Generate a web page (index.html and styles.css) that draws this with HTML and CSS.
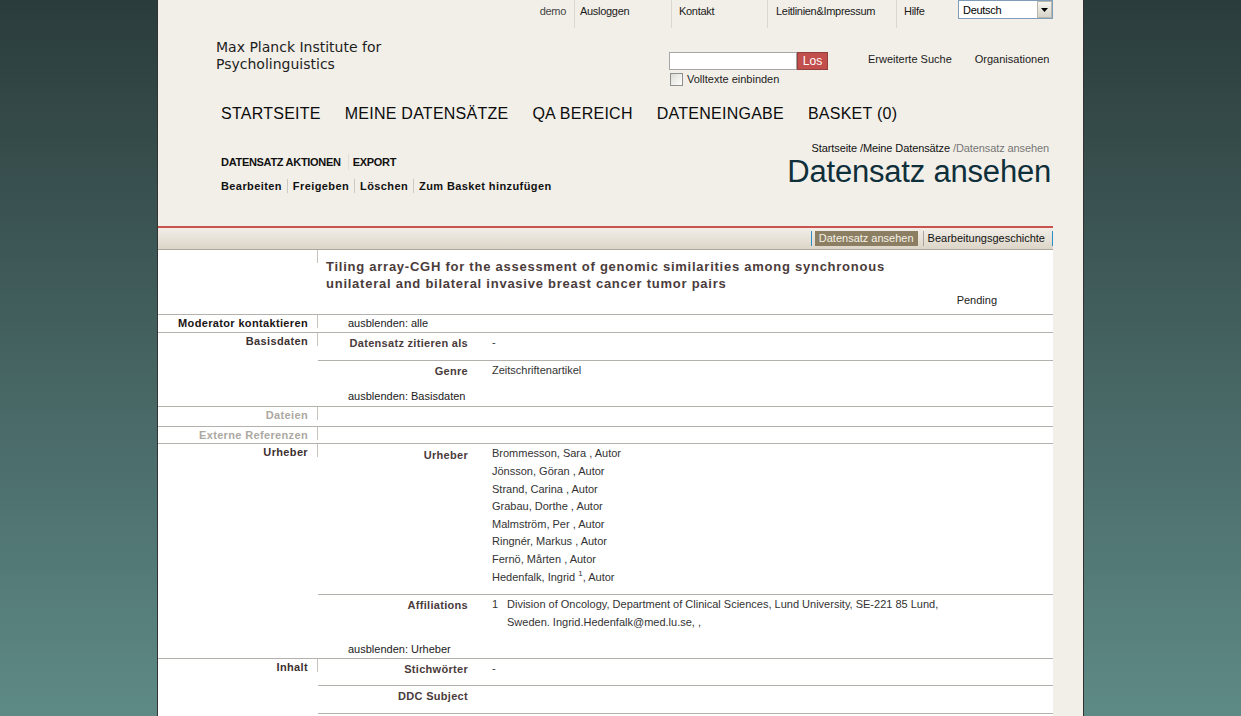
FILE: index.html
```html
<!DOCTYPE html>
<html lang="de">
<head>
<meta charset="utf-8">
<title>Datensatz ansehen</title>
<link rel="stylesheet" href="styles.css">
</head>
<body>
<div class="page">
  <div class="main">
    <header class="header">
      <div class="topbar">
        <span class="user">demo</span>
        <a class="toplink toplink--logout">Ausloggen</a>
        <a class="toplink toplink--contact">Kontakt</a>
        <a class="toplink toplink--imprint">Leitlinien&amp;Impressum</a>
        <a class="toplink toplink--help">Hilfe</a>
        <div class="lang">
          <span class="lang-text">Deutsch</span>
          <span class="lang-btn"><svg width="7" height="4" viewBox="0 0 7 4"><path d="M0 0h7L3.5 4z" fill="#000"/></svg></span>
        </div>
      </div>
      <div class="brand">
        <div class="logo">Max Planck Institute for<br>Psycholinguistics</div>
        <div class="search">
          <div class="search-row">
            <span class="search-input"></span>
            <span class="search-btn">Los</span>
          </div>
          <label class="fulltext"><span class="checkbox"></span>Volltexte einbinden</label>
        </div>
        <div class="brand-links">
          <a>Erweiterte Suche</a>
          <a>Organisationen</a>
        </div>
      </div>
      <nav class="mainnav">
        <a>STARTSEITE</a>
        <a>MEINE DATENSÄTZE</a>
        <a>QA BEREICH</a>
        <a>DATENEINGABE</a>
        <a>BASKET (0)</a>
      </nav>
      <div class="subheader">
        <div class="actions-col">
          <div class="action-tabs">
            <span>DATENSATZ AKTIONEN</span>
            <span class="action-tab-sep">EXPORT</span>
          </div>
          <div class="action-links">
            <a>Bearbeiten</a>
            <a>Freigeben</a>
            <a>Löschen</a>
            <a>Zum Basket hinzufügen</a>
          </div>
        </div>
        <div class="title-col">
          <div class="breadcrumb">Startseite /Meine Datensätze <span class="crumb-current">/Datensatz ansehen</span></div>
          <h1 class="page-title">Datensatz ansehen</h1>
        </div>
      </div>
    </header>
    <div class="redline"></div>
    <div class="tabbar">
      <span class="tab tab--first"><span class="tab-active">Datensatz ansehen</span></span>
      <span class="tab">Bearbeitungsgeschichte</span>
      <span class="tab-end"></span>
    </div>
    <div class="record">
      <div class="rec-head">
        <div class="sec-label"></div>
        <div class="rec-head-body">
          <h2 class="rec-title">Tiling array-CGH for the assessment of genomic similarities among synchronous unilateral and bilateral invasive breast cancer tumor pairs</h2>
          <div class="status">Pending</div>
        </div>
      </div>

      <div class="sec sec--moderator">
        <div class="sec-label sec-label--dark">Moderator kontaktieren</div>
        <div class="sec-body"><div class="hide">ausblenden: alle</div></div>
      </div>

      <div class="sec sec--basis">
        <div class="sec-label">Basisdaten</div>
        <div class="sec-body">
          <div class="field"><div class="field-label">Datensatz zitieren als</div><div class="field-value">-</div></div>
          <div class="field"><div class="field-label">Genre</div><div class="field-value">Zeitschriftenartikel</div></div>
          <div class="hide">ausblenden: Basisdaten</div>
        </div>
      </div>

      <div class="sec sec--files">
        <div class="sec-label sec-label--muted">Dateien</div>
        <div class="sec-body"></div>
      </div>

      <div class="sec sec--refs">
        <div class="sec-label sec-label--muted">Externe Referenzen</div>
        <div class="sec-body"></div>
      </div>

      <div class="sec sec--creators">
        <div class="sec-label">Urheber</div>
        <div class="sec-body">
          <div class="field">
            <div class="field-label field-label--low">Urheber</div>
            <div class="field-value field-value--list">
              <div>Brommesson, Sara , Autor</div>
              <div>Jönsson, Göran , Autor</div>
              <div>Strand, Carina , Autor</div>
              <div>Grabau, Dorthe , Autor</div>
              <div>Malmström, Per , Autor</div>
              <div>Ringnér, Markus , Autor</div>
              <div>Fernö, Mårten , Autor</div>
              <div>Hedenfalk, Ingrid <sup class="sup">1</sup>, Autor</div>
            </div>
          </div>
          <div class="field">
            <div class="field-label">Affiliations</div>
            <div class="field-value aff">
              <span class="aff-num">1</span>
              <span class="aff-text">Division of Oncology, Department of Clinical Sciences, Lund University, SE-221 85 Lund, Sweden. Ingrid.Hedenfalk@med.lu.se, ,</span>
            </div>
          </div>
          <div class="hide">ausblenden: Urheber</div>
        </div>
      </div>

      <div class="sec sec--content">
        <div class="sec-label">Inhalt</div>
        <div class="sec-body">
          <div class="field"><div class="field-label">Stichwörter</div><div class="field-value">-</div></div>
          <div class="field"><div class="field-label">DDC Subject</div><div class="field-value"></div></div>
        </div>
      </div>
    </div>
  </div>
</div>
</body>
</html>
```
FILE: styles.css
```css
* { box-sizing: border-box; }
html, body { margin: 0; padding: 0; }
body {
  background: #5e8a86 linear-gradient(#2b3c3c, #5e8a86) no-repeat;
  background-size: 100% 716px;
  font-family: "Liberation Sans", Arial, sans-serif;
  font-size: 11px;
  color: #222;
}
a { color: inherit; text-decoration: none; }

.page {
  width: 927px;
  margin: 0 auto;
  background: #f2efe8;
  border-left: 1px solid #333;
  border-right: 1px solid #333;
  padding-right: 30px;
  min-height: 716px;
}
.main { width: 895px; }

/* top bar */
.topbar {
  display: flex;
  justify-content: flex-end;
  height: 28px;
  letter-spacing: -0.3px;
}
.user { padding-right: 8px; line-height: 22px; color: #444; }
.toplink { border-left: 1px solid #dcd8d0; line-height: 22px; color: #1a1a1a; }
.toplink--logout { width: 97px; padding-left: 5px; }
.toplink--contact { width: 96px; padding-left: 7px; }
.toplink--imprint { width: 129px; padding-left: 8px; }
.toplink--help { width: 62px; padding-left: 7px; }
.lang {
  width: 95px;
  height: 19px;
  border: 1px solid #7f9db9;
  background: #fff;
  display: flex;
  align-items: center;
  font-size: 11px;
}
.lang-text { padding-left: 4px; color: #000; }
.lang-btn {
  margin-left: auto;
  width: 15px;
  height: 17px;
  background: linear-gradient(#f6f5f0, #d6d3c9);
  border: 1px solid #b9b6ac;
  display: flex;
  align-items: center;
  justify-content: center;
}

/* brand row */
.brand { display: flex; height: 70px; padding-left: 58px; }
.logo {
  width: 453px;
  margin-top: 11px;
  font-family: "DejaVu Sans", sans-serif;
  font-size: 14px;
  line-height: 17px;
  color: #1e1e1e;
}
.search { width: 159px; margin-top: 24px; }
.search-row { display: flex; }
.search-input { width: 128px; height: 18px; border: 1px solid #a7a7a7; background: #fff; }
.search-btn {
  width: 31px;
  height: 18px;
  background: #c24f4c;
  border: 1px solid #93403d;
  color: #fff;
  font-size: 12px;
  line-height: 16px;
  text-align: center;
}
.fulltext {
  display: flex;
  align-items: center;
  gap: 4px;
  margin-top: 3px;
  padding-left: 1px;
  line-height: 13px;
}
.checkbox {
  width: 13px;
  height: 13px;
  border: 1px solid #8f8f8f;
  background: linear-gradient(135deg, #dcdcd6, #fff);
}
.brand-links {
  display: flex;
  gap: 23px;
  margin-left: 40px;
  padding-top: 24px;
  line-height: 14px;
  color: #1a1a1a;
}

/* main navigation */
.mainnav {
  display: flex;
  gap: 24px;
  padding-left: 63px;
  margin-top: 6px;
  font-size: 16px;
  line-height: 20px;
  letter-spacing: 0.25px;
  color: #0c0c0c;
}

/* sub header */
.subheader {
  display: flex;
  justify-content: space-between;
  height: 102px;
  padding: 0 2px 0 63px;
}
.actions-col { padding-top: 30px; }
.action-tabs {
  display: flex;
  font-weight: bold;
  line-height: 16px;
  letter-spacing: -0.3px;
  color: #111;
}
.action-tab-sep { margin-left: 7px; padding-left: 4px; border-left: 1px solid #e3dfd7; }
.action-links {
  display: flex;
  margin-top: 9px;
  font-weight: bold;
  line-height: 16px;
  letter-spacing: 0.4px;
  color: #111;
}
.action-links a { padding: 0 5px; border-left: 1px solid #cdc9c1; height: 14px; line-height: 15px; }
.action-links a:first-child { padding-left: 0; border-left: 0; }

.title-col { padding-top: 17px; text-align: right; }
.breadcrumb { line-height: 14px; letter-spacing: -0.1px; padding-right: 2px; color: #111; }
.crumb-current { color: #777; }
.page-title {
  margin: 0;
  font-size: 31px;
  line-height: 34px;
  font-weight: normal;
  letter-spacing: -0.2px;
  color: #0f2f3b;
}

/* red line + tabs */
.redline { height: 2px; background: #c9534f; }
.tabbar {
  height: 22px;
  background: linear-gradient(#f2eee7, #dcd5c8);
  border-bottom: 1px solid #aaa6a0;
  display: flex;
  justify-content: flex-end;
  align-items: center;
}
.tab {
  border-left: 1px solid #a9a59e;
  padding: 0 7px 0 4px;
  line-height: 15px;
  height: 15px;
  color: #111;
}
.tab--first { border-left-color: #2b8ec6; padding: 0 5px 0 3px; }
.tab-active { display: block; background: #8b7e62; color: #f5f1e6; padding: 0 4px; }
.tab-end { width: 1px; height: 15px; background: #2b8ec6; }

/* record */
.record { background: #fff; padding-bottom: 20px; }
.rec-head { display: flex; height: 64px; }
.rec-head-body { flex: 1; padding: 8px 56px 0 8px; }
.rec-title {
  margin: 0;
  max-width: 595px;
  font-size: 13px;
  font-weight: bold;
  line-height: 17px;
  letter-spacing: 0.75px;
  color: #4b3c3c;
}
.status { text-align: right; line-height: 14px; margin-top: 1px; color: #222; }

.sec { display: flex; border-top: 1px solid #b4b0ab; }
.sec-label {
  flex: none;
  width: 160px;
  height: 13px;
  padding-right: 9px;
  border-right: 1px solid #c8c3bd;
  text-align: right;
  font-weight: bold;
  line-height: 17px;
  letter-spacing: 0.35px;
  color: #3d3030;
  white-space: nowrap;
}
.sec-label--dark { color: #1a1414; }
.sec-label--muted { color: #aca8a2; }
.sec-body { flex: 1; min-width: 0; }
.sec--files { min-height: 20px; }
.sec--refs { min-height: 17px; }
.sec--content .field:last-child { border-bottom: 1px solid #b4b0ab; }

.hide { padding-left: 30px; line-height: 18px; color: #1a1a1a; }
.sec--moderator .hide { line-height: 17px; }
.sec--basis .hide { line-height: 19px; }

.field {
  display: flex;
  border-top: 1px solid #b4b0ab;
  padding: 1px 0 8px;
  line-height: 17.7px;
}
.field:first-child { border-top: 0; }
.field-label {
  flex: none;
  width: 150px;
  text-align: right;
  font-weight: bold;
  letter-spacing: 0.3px;
  color: #4a3b3b;
  padding-top: 1px;
  margin-bottom: -1px;
}
.field-label--low { padding-top: 2px; margin-bottom: -2px; }
.field-value { margin-left: 24px; color: #333; }
.field-value--list { line-height: 17.6px; }
.sup { font-size: 8px; line-height: 0; vertical-align: baseline; position: relative; top: -5px; }
.aff { display: flex; }
.aff-num { flex: none; width: 15px; }
.aff-text { max-width: 440px; }
```
